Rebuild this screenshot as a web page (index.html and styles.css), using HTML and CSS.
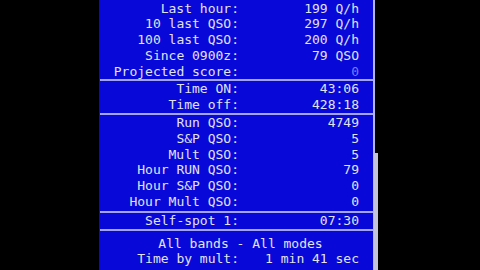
FILE: index.html
```html
<!DOCTYPE html>
<html>
<head>
<meta charset="utf-8">
<link rel="stylesheet" href="styles.css">
</head>
<body>
<div class="screen">
  <div class="panel">
    <div class="sec sec-rate">
      <div class="row"><span class="lbl">Last hour:</span><span class="val">199 Q/h</span></div>
      <div class="row"><span class="lbl">10 last QSO:</span><span class="val">297 Q/h</span></div>
      <div class="row"><span class="lbl">100 last QSO:</span><span class="val">200 Q/h</span></div>
      <div class="row"><span class="lbl">Since 0900z:</span><span class="val">79 QSO</span></div>
      <div class="row"><span class="lbl">Projected score:</span><span class="val dim">0</span></div>
    </div>
    <div class="sec sec-time">
      <div class="row"><span class="lbl">Time ON:</span><span class="val">43:06</span></div>
      <div class="row"><span class="lbl">Time off:</span><span class="val">428:18</span></div>
    </div>
    <div class="sec sec-qso">
      <div class="row"><span class="lbl">Run QSO:</span><span class="val">4749</span></div>
      <div class="row"><span class="lbl">S&amp;P QSO:</span><span class="val">5</span></div>
      <div class="row"><span class="lbl">Mult QSO:</span><span class="val">5</span></div>
      <div class="row"><span class="lbl">Hour RUN QSO:</span><span class="val">79</span></div>
      <div class="row"><span class="lbl">Hour S&amp;P QSO:</span><span class="val">0</span></div>
      <div class="row"><span class="lbl">Hour Mult QSO:</span><span class="val">0</span></div>
    </div>
    <div class="sec sec-spot">
      <div class="row"><span class="lbl">Self-spot 1:</span><span class="val">07:30</span></div>
    </div>
    <div class="sec sec-mult">
      <div class="center">All bands - All modes</div>
      <div class="row"><span class="lbl">Time by mult:</span><span class="val">1 min 41 sec</span></div>
    </div>
  </div>
  <div class="scroll"></div>
</div>
</body>
</html>
```

FILE: styles.css
```css
html, body {
  margin: 0;
  padding: 0;
  background: #000;
}
body {
  width: 480px;
  height: 270px;
  overflow: hidden;
  font-family: "DejaVu Sans Mono", monospace;
  font-size: 13px;
  color: #e2e2ee;
}
.screen {
  position: relative;
  width: 480px;
  height: 270px;
  display: flex;
}
.panel {
  margin-left: 99px;
  width: 274px;
  height: 270px;
  background: #0808d8;
  border-right: 2px solid #b4b4f4;
  display: flex;
  flex-direction: column;
}
.sec + .sec {
  border-top: 2px solid #a4a4f4;
  margin-left: 1px;
}
.sec-rate { padding-top: 0.5px; }
.sec-qso { padding-bottom: 1px; }
.sec-mult { padding-top: 5px; }
.row {
  display: grid;
  grid-template-columns: 140px 120px;
  height: 15.8px;
  line-height: 15.8px;
  white-space: pre;
}
.sec + .sec .row { grid-template-columns: 139px 120px; }
.lbl { text-align: right; }
.val { text-align: right; }
.dim { color: #7a7aff; }
.center {
  height: 15.8px;
  line-height: 15.8px;
  text-align: center;
  padding-left: 8px;
}
.scroll {
  position: absolute;
  left: 374px;
  top: 153px;
  width: 4px;
  height: 117px;
  background: #c4c4dc;
}
```
